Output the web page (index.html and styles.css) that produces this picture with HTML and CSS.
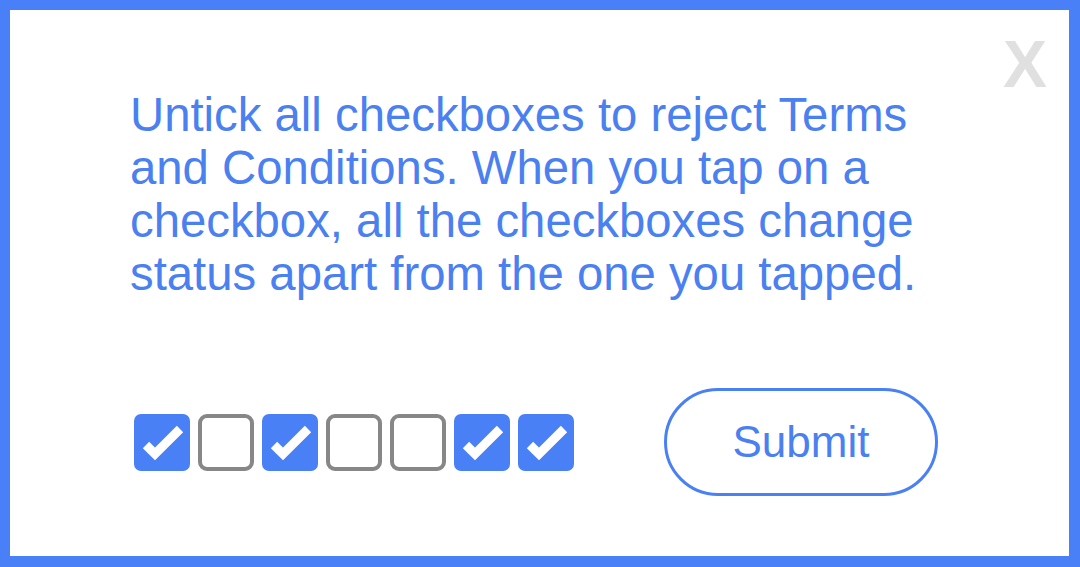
FILE: index.html
```html
<!DOCTYPE html>
<html>
<head>
<meta charset="utf-8">
<link rel="stylesheet" href="styles.css">
</head>
<body>
<div class="frame">
  <div class="close">X</div>
  <p class="message">Untick all checkboxes to reject Terms<br>and Conditions. When you tap on a<br>checkbox, all the checkboxes change<br>status apart from the one you tapped.</p>
  <div class="controls">
    <div class="boxes">
      <span class="box checked"><svg viewBox="0 0 56 57"><polyline points="12,31 21,40 46,15"/></svg></span>
      <span class="box"></span>
      <span class="box checked"><svg viewBox="0 0 56 57"><polyline points="12,31 21,40 46,15"/></svg></span>
      <span class="box"></span>
      <span class="box"></span>
      <span class="box checked"><svg viewBox="0 0 56 57"><polyline points="12,31 21,40 46,15"/></svg></span>
      <span class="box checked"><svg viewBox="0 0 56 57"><polyline points="12,31 21,40 46,15"/></svg></span>
    </div>
    <button class="submit">Submit</button>
  </div>
</div>
</body>
</html>
```
FILE: styles.css
```css
html, body {
  margin: 0;
  padding: 0;
  background: #ffffff;
}
.frame {
  position: relative;
  box-sizing: border-box;
  width: 1080px;
  height: 567px;
  border: 10px solid #4a80f7;
  border-right-width: 11px;
  border-bottom-width: 11px;
  background: #ffffff;
  font-family: "Liberation Sans", Arial, sans-serif;
  display: flex;
  flex-direction: column;
  padding: 78px 0 0 120px;
}
.close {
  position: absolute;
  top: 21px;
  right: 22px;
  font-family: "Liberation Sans", Arial, sans-serif;
  font-weight: bold;
  font-size: 66px;
  line-height: 66px;
  color: #e0e0e0;
}
.message {
  margin: 0;
  font-size: 47.3px;
  line-height: 53px;
  color: #4a80f0;
}
.controls {
  display: flex;
  align-items: center;
  margin-top: 88px;
  padding-left: 4px;
}
.boxes {
  display: flex;
  gap: 8px;
}
.box {
  box-sizing: border-box;
  width: 56px;
  height: 57px;
  border: 4px solid #878787;
  border-radius: 9px;
  background: #fff;
  display: block;
}
.box.checked {
  border: none;
  background: #4a80f5;
  border-radius: 7px;
}
.box svg {
  display: block;
  width: 56px;
  height: 57px;
}
.box polyline {
  fill: none;
  stroke: #ffffff;
  stroke-width: 9;
  stroke-linejoin: miter;
}
.submit {
  margin-left: 90px;
  box-sizing: border-box;
  width: 274px;
  height: 108px;
  border: 3px solid #4a80f5;
  border-radius: 54px;
  background: #fff;
  color: #4a80f0;
  font-family: "Liberation Sans", Arial, sans-serif;
  font-size: 44px;
  padding: 0;
}
```
